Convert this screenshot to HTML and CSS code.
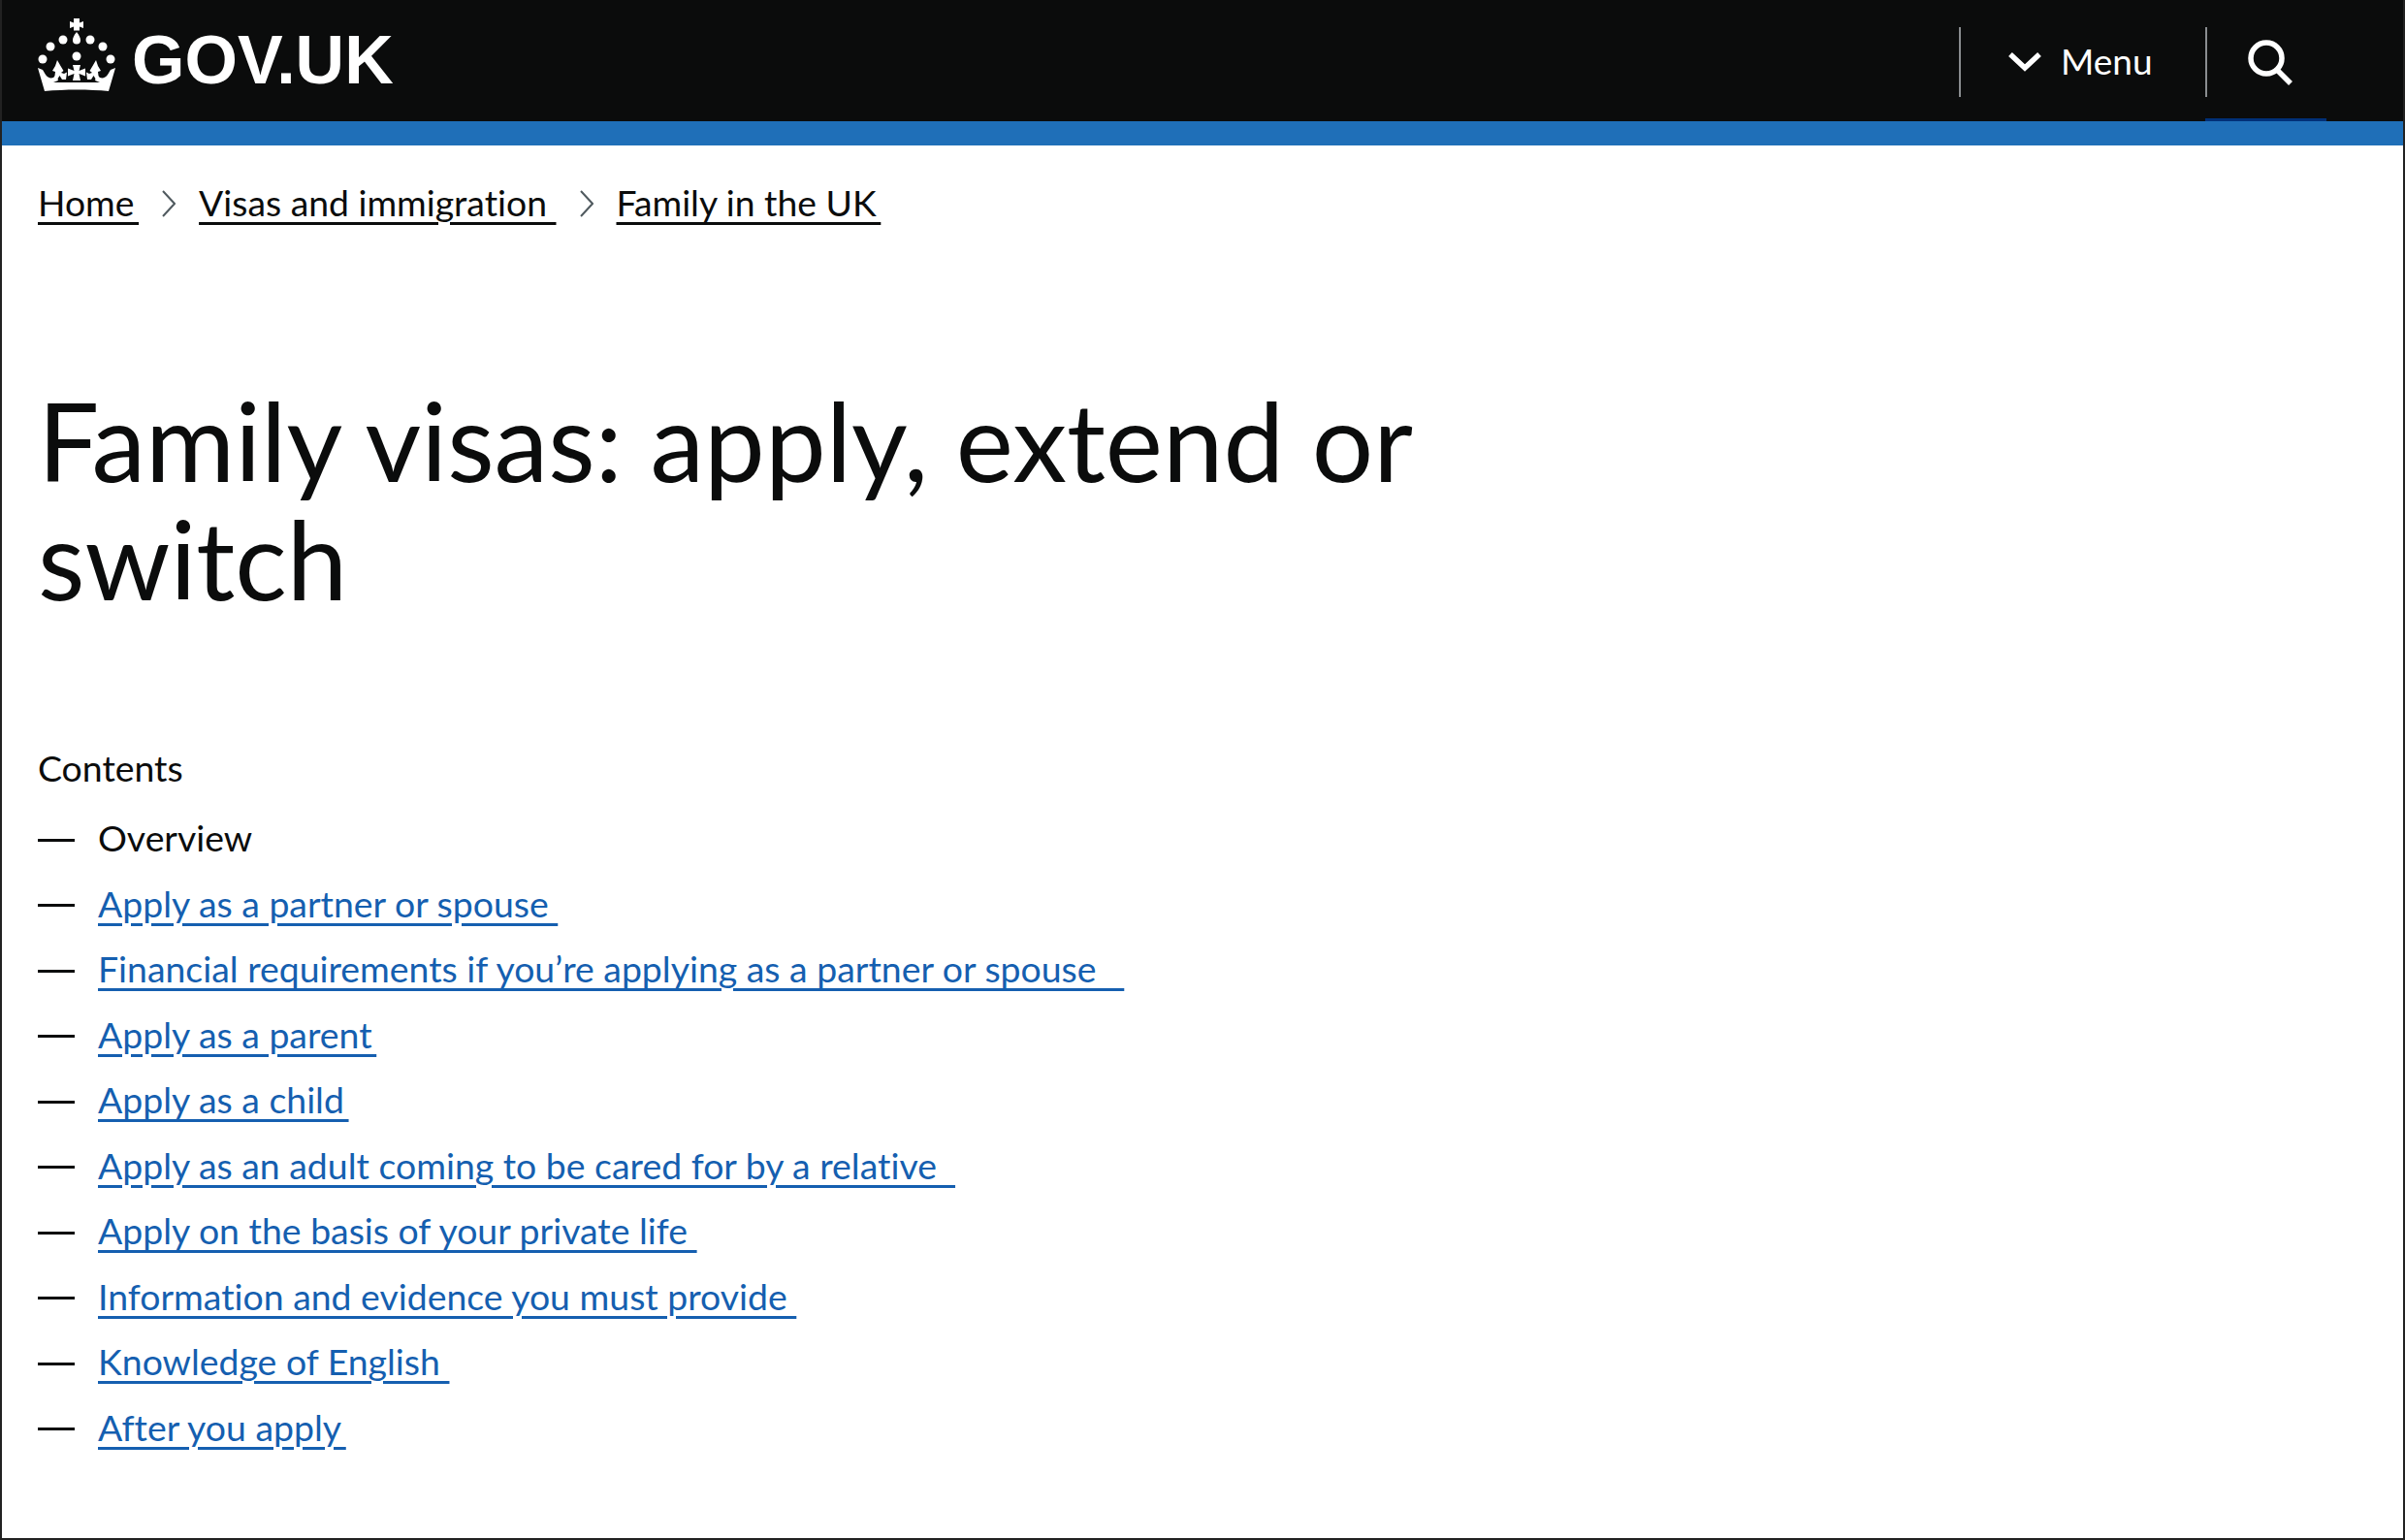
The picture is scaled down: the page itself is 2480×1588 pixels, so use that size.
FILE: index.html
```html
<!DOCTYPE html>
<html lang="en">
  <head>
    <meta charset="UTF-8" />
    <title>Family visas: apply, extend or switch</title>
    <link rel="stylesheet" href="styles.css">
  </head>
  <body>
    <header class="site-header">
      <a class="logo" href="#">
        <svg class="crown" viewBox="0 0 80 76" aria-hidden="true">
          <path d="M37 0h6v4.500l4-1.500v7l-4-1.500v4h-6v-4l-4 1.500v-7l4 1.500z"/>
          <path d="M40 14c2.500 3 4 6 4 8.500a4 4 0 0 1-8 0c0-2.500 1.500-5.500 4-8.500z"/>
          <circle cx="26" cy="22" r="4.500"/>
          <circle cx="54" cy="22" r="4.500"/>
          <circle cx="13" cy="29" r="4.500"/>
          <circle cx="67" cy="29" r="4.500"/>
          <circle cx="5" cy="42" r="4.500"/>
          <circle cx="75" cy="42" r="4.500"/>
          <circle cx="40" cy="39" r="4.500"/>
          <path d="M0 51l5 2 3 5c2 3 5 4 8 3l3-3 2 6-5 2h48l-5-2 2-6 3 3c3 1 6 0 8-3l3-5 5-2-7 24c-20-2-45-2-66 0z"/>
          <path d="M20 43l3.500 6 3 5-2.500 2 3 1 3-1.500-1 7.500h-4l-2.500-4-2.500 4h-3l1-8-3-1 3-5z"/>
          <path d="M60 43l-3.500 6-3 5 2.500 2-3 1-3-1.500 1 7.500h4l2.500-4 2.500 4h3l-1-8 3-1-3-5z"/>
          <path d="M36 48h8l-1.500 6 6.500-2.500v8l-6.500-2.500 1.500 7h-8l1.500-7-6.500 2.500v-8l6.500 2.500z"/>
        </svg>
        <span class="logo-text">GOV.UK</span>
      </a>
      <nav class="header-nav">
        <button class="menu-btn" type="button">
          <svg class="chevron" viewBox="0 0 36 22" aria-hidden="true"><path d="M3 4l15 14L33 4"/></svg>
          Menu
        </button>
        <button class="search-btn" type="button" aria-label="Search">
          <svg class="search-icon" viewBox="0 0 48 50" aria-hidden="true">
            <circle cx="20" cy="20" r="16"/>
            <path d="M31 32l14 14"/>
          </svg>
        </button>
      </nav>
    </header>
    <div class="blue-bar"></div>

    <main class="page">
      <ol class="breadcrumbs">
        <li><a href="#">Home&thinsp;</a></li>
        <li>
          <svg class="crumb-sep" viewBox="0 0 14 28" aria-hidden="true"><path d="M1 1l12 13L1 27"/></svg>
          <a href="#">Visas and immigration&nbsp;</a>
        </li>
        <li>
          <svg class="crumb-sep" viewBox="0 0 14 28" aria-hidden="true"><path d="M1 1l12 13L1 27"/></svg>
          <a href="#">Family in the UK&thinsp;</a>
        </li>
      </ol>

      <h1>Family visas: apply, extend or switch</h1>

      <h2 class="contents-title">Contents</h2>
      <ol class="contents">
        <li>Overview</li>
        <li><a href="#">Apply as a partner or spouse&nbsp;</a></li>
        <li><a href="#">Financial requirements if you’re applying as a partner or spouse&nbsp;&nbsp;&nbsp;</a></li>
        <li><a href="#">Apply as a parent&thinsp;</a></li>
        <li><a href="#">Apply as a child&thinsp;</a></li>
        <li><a href="#">Apply as an adult coming to be cared for by a relative&nbsp;&nbsp;</a></li>
        <li><a href="#">Apply on the basis of your private life&nbsp;</a></li>
        <li><a href="#">Information and evidence you must provide&nbsp;</a></li>
        <li><a href="#">Knowledge of English&nbsp;</a></li>
        <li><a href="#">After you apply&thinsp;</a></li>
      </ol>
    </main>
  </body>
</html>
```

FILE: styles.css
```css
html,
body {
  margin: 0;
  padding: 0;
}
body {
  height: 1588px;
  overflow: hidden;
  box-sizing: border-box;
  font-family: "Lato", "Open Sans", sans-serif;
  font-variant-ligatures: none;
  color: #0b0c0c;
  background: #fff;
  border-left: 2px solid #222;
  border-right: 2px solid #222;
  border-bottom: 2px solid #222;
}
a {
  color: inherit;
}
.site-header {
  height: 125px;
  margin: 0 -2px;
  background: #0b0c0c;
  display: flex;
  align-items: stretch;
  justify-content: space-between;
  padding-left: 39px;
  padding-right: 81px;
}
.logo {
  display: flex;
  align-items: flex-start;
  gap: 17px;
  color: #fff;
  text-decoration: none;
}
.crown {
  width: 80px;
  height: 76px;
  margin-top: 19px;
  fill: #fff;
}
.logo-text {
  font-family: "Liberation Sans", Arial, sans-serif;
  font-weight: bold;
  font-size: 70px;
  line-height: 72px;
  margin-top: 26px;
}
.header-nav {
  display: flex;
  align-items: stretch;
}
.menu-btn,
.search-btn {
  background: none;
  border: none;
  color: #fff;
  font-family: inherit;
  padding: 0;
  position: relative;
}
.menu-btn {
  width: 254px;
  display: flex;
  align-items: center;
  gap: 19px;
  padding-left: 50px;
  font-size: 37px;
  box-sizing: border-box;
}
.menu-btn::before,
.search-btn::before {
  content: "";
  position: absolute;
  left: 0;
  top: 28px;
  width: 2px;
  height: 72px;
  background: #8a8d90;
}
.chevron {
  width: 36px;
  height: 22px;
  fill: none;
  stroke: #fff;
  stroke-width: 5.500;
}
.search-btn {
  width: 125px;
  border-bottom: 3px solid #003078;
  box-sizing: border-box;
}
.search-icon {
  position: absolute;
  left: 43px;
  top: 40px;
  width: 48px;
  height: 50px;
  fill: none;
  stroke: #fff;
  stroke-width: 5.500;
}
.blue-bar {
  height: 25px;
  margin: 0 -2px;
  background: #1f6fb8;
}
.page {
  padding-left: 37px;
}
.breadcrumbs {
  list-style: none;
  margin: 0;
  padding: 36px 0 0;
  display: flex;
  font-size: 37.300px;
  line-height: 46px;
}
.breadcrumbs a {
  text-underline-offset: 6px;
  text-decoration-thickness: 3px;
}
.breadcrumbs li {
  display: flex;
  align-items: center;
}
.crumb-sep {
  width: 14px;
  height: 28px;
  margin: 2px 24px 0 24px;
  fill: none;
  stroke: #505a5f;
  stroke-width: 2;
}
h1 {
  margin: 161px 0 0;
  width: 1480px;
  font-size: 112px;
  font-weight: 400;
  line-height: 122px;
}
.contents-title {
  margin: 132px 0 0;
  font-size: 37.400px;
  font-weight: 400;
  line-height: 46px;
}
.contents {
  list-style: none;
  margin: 26px 0 0;
  padding: 0;
  font-size: 37.400px;
  line-height: 46px;
}
.contents li {
  display: flex;
  align-items: center;
  gap: 24px;
  margin-bottom: 21.500px;
}
.contents li::before {
  content: "";
  width: 38px;
  height: 3px;
  margin-top: 4px;
  background: #0b0c0c;
}
.contents a {
  color: #155fb0;
  text-underline-offset: 6px;
  text-decoration-thickness: 3px;
}
```
